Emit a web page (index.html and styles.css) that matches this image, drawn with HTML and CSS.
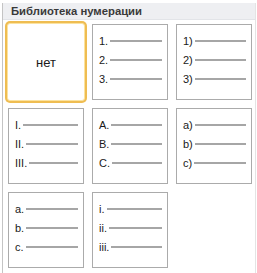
FILE: index.html
```html
<!DOCTYPE html>
<html lang="ru">
<head>
  <meta charset="UTF-8">
  <title>Библиотека нумерации</title>
  <link rel="stylesheet" href="styles.css">
</head>
<body>
  <div class="panel">
    <div class="panel-header">Библиотека нумерации</div>

    <div class="list-grid">
      <div class="list-cell selected">
        <span class="none-text">нет</span>
      </div>

      <div class="list-cell">
        <div class="list-row"><span class="marker">1.</span><span class="rule"></span></div>
        <div class="list-row"><span class="marker">2.</span><span class="rule"></span></div>
        <div class="list-row"><span class="marker">3.</span><span class="rule"></span></div>
      </div>

      <div class="list-cell">
        <div class="list-row"><span class="marker">1)</span><span class="rule"></span></div>
        <div class="list-row"><span class="marker">2)</span><span class="rule"></span></div>
        <div class="list-row"><span class="marker">3)</span><span class="rule"></span></div>
      </div>

      <div class="list-cell">
        <div class="list-row"><span class="marker">I.</span><span class="rule"></span></div>
        <div class="list-row"><span class="marker">II.</span><span class="rule"></span></div>
        <div class="list-row"><span class="marker">III.</span><span class="rule"></span></div>
      </div>

      <div class="list-cell">
        <div class="list-row"><span class="marker">A.</span><span class="rule"></span></div>
        <div class="list-row"><span class="marker">B.</span><span class="rule"></span></div>
        <div class="list-row"><span class="marker">C.</span><span class="rule"></span></div>
      </div>

      <div class="list-cell">
        <div class="list-row"><span class="marker">a)</span><span class="rule"></span></div>
        <div class="list-row"><span class="marker">b)</span><span class="rule"></span></div>
        <div class="list-row"><span class="marker">c)</span><span class="rule"></span></div>
      </div>

      <div class="list-cell">
        <div class="list-row"><span class="marker">a.</span><span class="rule"></span></div>
        <div class="list-row"><span class="marker">b.</span><span class="rule"></span></div>
        <div class="list-row"><span class="marker">c.</span><span class="rule"></span></div>
      </div>

      <div class="list-cell">
        <div class="list-row"><span class="marker">i.</span><span class="rule"></span></div>
        <div class="list-row"><span class="marker">ii.</span><span class="rule"></span></div>
        <div class="list-row"><span class="marker">iii.</span><span class="rule"></span></div>
      </div>
    </div>
  </div>
</body>
</html>
```

FILE: styles.css
```css
/* Base */
:root {
  --cell-border: #ababab;
  --rule-color: #a6a6a6;
  --text-color: #1a1a1a;
  --header-bg: #eeeff2;
  --select-outer: #efbd52;
  --select-inner: #fbe3a0;
}

* {
  margin: 0;
  padding: 0;
  box-sizing: border-box;
}

html, body {
  height: 100%;
}

body {
  font-family: 'Liberation Sans', Arial, sans-serif;
  color: var(--text-color);
  background-color: #ffffff;
  overflow: hidden;
}

/* Panel */
.panel {
  margin: 3px 1px 0 2px;
  height: calc(100% - 3px);
  border-left: 1px solid #c4c4c4;
  border-right: 1px solid #e4e4e4;
  background-color: #ffffff;
}

.panel-header {
  height: 17px;
  padding-left: 8px;
  background-color: var(--header-bg);
  border-bottom: 1px solid #e2e4e8;
  font-size: 11.3px;
  font-weight: bold;
  line-height: 17px;
  color: #3a3a3a;
}

/* Grid of numbering formats */
.list-grid {
  display: grid;
  grid-template-columns: repeat(3, 76px);
  grid-auto-rows: 76px;
  gap: 8px;
  padding: 4px 0 0 5px;
}

.list-cell {
  border: 1px solid var(--cell-border);
  padding: 6px 5px 0 6px;
  background-color: #ffffff;
}

.list-cell.selected {
  margin: -1px;
  display: flex;
  align-items: center;
  justify-content: center;
  padding: 0;
  border: 1px solid var(--select-inner);
  border-radius: 3px;
  box-shadow: 0 0 0 2px var(--select-outer);
}

.none-text {
  font-size: 13px;
}

.list-row {
  display: flex;
  align-items: center;
  height: 19px;
  font-size: 11px;
}

.marker {
  margin-right: 2px;
}

.rule {
  flex: 1;
  height: 2px;
  margin-top: 1px;
  background-color: var(--rule-color);
}
```
